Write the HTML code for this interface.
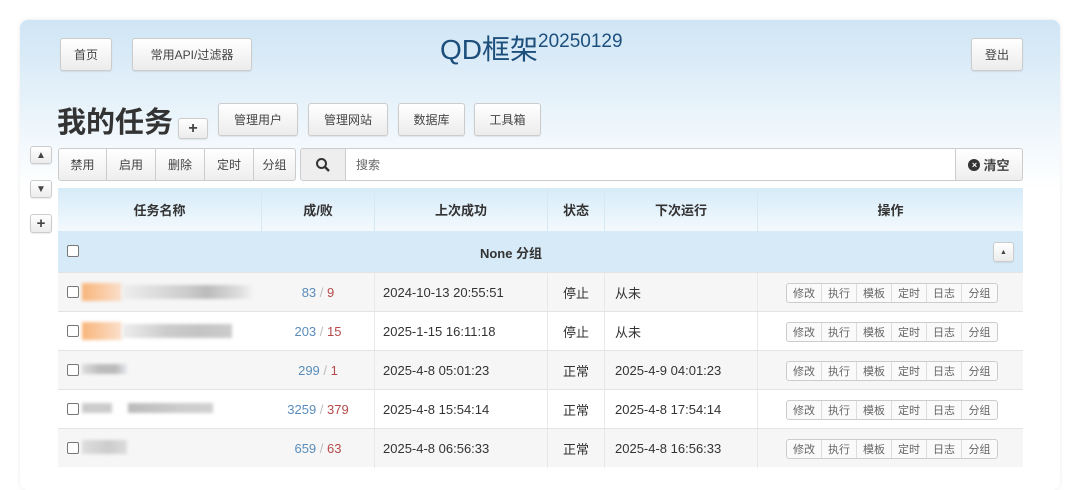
<!DOCTYPE html>
<html><head><meta charset="utf-8"><style>
*{box-sizing:border-box;margin:0;padding:0}
body{width:1080px;height:476px;background:#fff;font-family:"Liberation Sans","Noto Sans CJK SC",sans-serif;position:relative;overflow:hidden;color:#333}
.card{position:absolute;left:20px;top:20px;width:1040px;height:470px;border-radius:8px;background:linear-gradient(180deg,#cfe5f5 0px,#e3f0f9 70px,#f7fbfe 140px,#fff 170px);box-shadow:0 0 6px rgba(0,0,0,.08)}
.a{position:absolute}
.btn{position:absolute;border:1px solid #ccc;border-radius:3px;background:linear-gradient(#fff,#ececec);font-size:12px;color:#444;display:flex;align-items:center;justify-content:center;box-shadow:0 1px 1px rgba(0,0,0,.08)}
.tb{position:absolute;top:148px;height:33px;border:1px solid #ccc;background:linear-gradient(#fff,#eee);font-size:12px;display:flex;align-items:center;justify-content:center;color:#444}
.hd{position:absolute;top:188px;height:43px;font-size:13px;font-weight:bold;display:flex;align-items:center;justify-content:center;border-right:1px solid #d8e8f3}
.row{position:absolute;left:58px;width:965px;height:39px;border-top:1px solid #e4e4e4;font-size:13px}
.c{position:absolute;top:0;height:39px;display:flex;align-items:center;border-right:1px solid #e8e8e8}
.cb{position:absolute;left:9px;top:13px;width:12px;height:12px;border:1px solid #777;border-radius:2px;background:#fff}
.ops{position:absolute;left:728px;top:10px;height:20px;display:flex;border:1px solid #ccc;border-radius:3px;background:#fafafa}
.ops span{width:35px;font-size:11px;color:#666;display:flex;align-items:center;justify-content:center;border-right:1px solid #ddd}
.ops span:last-child{border-right:none}
.s{color:#5a8dbb}.f{color:#b54a4a}.sl{color:#bbb}
.blur{position:absolute;height:10px;filter:blur(1.5px)}
</style></head><body>
<div class="card"></div>
<div class="btn" style="left:60px;top:38px;width:52px;height:33px">首页</div>
<div class="btn" style="left:132px;top:38px;width:120px;height:33px">常用API/过滤器</div>
<div class="a" style="left:440px;top:28px;font-size:28px;color:#1d4f7c">QD框架<sup style="font-size:19px;position:relative;top:-2px">20250129</sup></div>
<div class="btn" style="left:971px;top:38px;width:52px;height:33px">登出</div>
<div class="a" style="left:57px;top:99px;font-size:29px;font-weight:bold;color:#333">我的任务</div>
<div class="btn" style="left:178px;top:118px;width:30px;height:21px;font-weight:bold;font-size:16px">+</div>
<div class="btn" style="left:218px;top:103px;width:80px;height:33px">管理用户</div>
<div class="btn" style="left:308px;top:103px;width:80px;height:33px">管理网站</div>
<div class="btn" style="left:398px;top:103px;width:67px;height:33px">数据库</div>
<div class="btn" style="left:474px;top:103px;width:67px;height:33px">工具箱</div>
<div class="btn" style="left:30px;top:146px;width:22px;height:18px;font-size:10px">&#9650;</div>
<div class="btn" style="left:30px;top:180px;width:22px;height:18px;font-size:10px">&#9660;</div>
<div class="btn" style="left:30px;top:214px;width:22px;height:19px;font-size:15px;font-weight:bold">+</div>
<div class="tb" style="left:58px;width:49px;border-radius:3px 0 0 3px">禁用</div>
<div class="tb" style="left:106px;width:50px">启用</div>
<div class="tb" style="left:155px;width:50px">删除</div>
<div class="tb" style="left:204px;width:50px">定时</div>
<div class="tb" style="left:253px;width:43px;border-radius:0 3px 3px 0">分组</div>
<div class="tb" style="left:300px;width:46px;background:#eee;border-radius:3px 0 0 3px"><svg width="16" height="16" viewBox="0 0 16 16"><circle cx="6.5" cy="6.5" r="4.5" fill="none" stroke="#333" stroke-width="2"/><path d="M10 10l4 4" stroke="#333" stroke-width="2.4"/></svg></div>
<div class="tb" style="left:345px;width:611px;background:#fff;justify-content:flex-start;padding-left:10px;color:#666">搜索</div>
<div class="tb" style="left:955px;width:68px;border-radius:0 3px 3px 0;font-weight:bold;font-size:13px"><span style="display:inline-block;width:12px;height:12px;border-radius:50%;background:#333;color:#fff;font-size:9px;line-height:12px;text-align:center;margin-right:3px">×</span>清空</div>
<div class="a" style="left:58px;top:188px;width:965px;height:43px;background:linear-gradient(#d6ebf8,#f3f9fd)"></div>
<div class="hd" style="left:58px;width:204px">任务名称</div>
<div class="hd" style="left:262px;width:113px">成/败</div>
<div class="hd" style="left:375px;width:173px">上次成功</div>
<div class="hd" style="left:548px;width:57px">状态</div>
<div class="hd" style="left:605px;width:153px">下次运行</div>
<div class="hd" style="left:758px;width:265px;border-right:none">操作</div>
<div class="a" style="left:58px;top:231px;width:965px;height:41px;background:#d7eaf7;font-size:13px;font-weight:bold">
<div class="cb" style="top:14px"></div>
<div class="a" style="top:12px;text-align:center;left:0;width:1022px;margin-left:-58px">None 分组</div>
<div class="btn" style="left:935px;top:11px;width:21px;height:20px;font-size:7px">&#9650;</div>
</div>

<div class="row" style="top:272px;background:#f6f6f6"><div class="cb"></div>
<div class="blur" style="left:24px;top:10px;width:40px;height:18px;background:linear-gradient(90deg,#f8b57a,#fbe0cc)"></div><div class="blur" style="left:64px;top:12px;width:130px;height:14px;background:linear-gradient(90deg,#eee,#ccc 50%,#bbb 65%,#ddd 90%,#f2f2f2)"></div>
<div class="c" style="left:204px;width:113px;justify-content:center"><span class="s">83</span>&nbsp;<span class="sl">/</span>&nbsp;<span class="f">9</span></div>
<div class="c" style="left:317px;width:173px;padding-left:8px">2024-10-13 20:55:51</div>
<div class="c" style="left:490px;width:57px;justify-content:center">停止</div>
<div class="c" style="left:547px;width:153px;padding-left:10px">从未</div>
<div class="ops"><span>修改</span><span>执行</span><span>模板</span><span>定时</span><span>日志</span><span>分组</span></div></div>

<div class="row" style="top:311px;background:#fff"><div class="cb"></div>
<div class="blur" style="left:24px;top:10px;width:40px;height:18px;background:linear-gradient(90deg,#f8b57a,#fbe0cc)"></div><div class="blur" style="left:64px;top:12px;width:110px;height:14px;background:linear-gradient(90deg,#eee,#ccc 40%,#c4c4c4 70%,#ccc)"></div>
<div class="c" style="left:204px;width:113px;justify-content:center"><span class="s">203</span>&nbsp;<span class="sl">/</span>&nbsp;<span class="f">15</span></div>
<div class="c" style="left:317px;width:173px;padding-left:8px">2025-1-15 16:11:18</div>
<div class="c" style="left:490px;width:57px;justify-content:center">停止</div>
<div class="c" style="left:547px;width:153px;padding-left:10px">从未</div>
<div class="ops"><span>修改</span><span>执行</span><span>模板</span><span>定时</span><span>日志</span><span>分组</span></div></div>

<div class="row" style="top:350px;background:#f6f6f6"><div class="cb"></div>
<div class="blur" style="left:24px;top:13px;width:45px;height:10px;background:linear-gradient(90deg,#ddd,#bbb 40%,#bbb 75%,#e4e8ef)"></div>
<div class="c" style="left:204px;width:113px;justify-content:center"><span class="s">299</span>&nbsp;<span class="sl">/</span>&nbsp;<span class="f">1</span></div>
<div class="c" style="left:317px;width:173px;padding-left:8px">2025-4-8 05:01:23</div>
<div class="c" style="left:490px;width:57px;justify-content:center">正常</div>
<div class="c" style="left:547px;width:153px;padding-left:10px">2025-4-9 04:01:23</div>
<div class="ops"><span>修改</span><span>执行</span><span>模板</span><span>定时</span><span>日志</span><span>分组</span></div></div>

<div class="row" style="top:389px;background:#fff"><div class="cb"></div>
<div class="blur" style="left:24px;top:13px;width:30px;height:10px;background:#ccc"></div><div class="blur" style="left:70px;top:13px;width:85px;height:10px;background:linear-gradient(90deg,#bbb,#ccc 60%,#d0d0d0)"></div>
<div class="c" style="left:204px;width:113px;justify-content:center"><span class="s">3259</span>&nbsp;<span class="sl">/</span>&nbsp;<span class="f">379</span></div>
<div class="c" style="left:317px;width:173px;padding-left:8px">2025-4-8 15:54:14</div>
<div class="c" style="left:490px;width:57px;justify-content:center">正常</div>
<div class="c" style="left:547px;width:153px;padding-left:10px">2025-4-8 17:54:14</div>
<div class="ops"><span>修改</span><span>执行</span><span>模板</span><span>定时</span><span>日志</span><span>分组</span></div></div>

<div class="row" style="top:428px;background:#f6f6f6"><div class="cb"></div>
<div class="blur" style="left:24px;top:11px;width:45px;height:14px;background:linear-gradient(90deg,#ddd,#ccc 60%,#ddd)"></div>
<div class="c" style="left:204px;width:113px;justify-content:center"><span class="s">659</span>&nbsp;<span class="sl">/</span>&nbsp;<span class="f">63</span></div>
<div class="c" style="left:317px;width:173px;padding-left:8px">2025-4-8 06:56:33</div>
<div class="c" style="left:490px;width:57px;justify-content:center">正常</div>
<div class="c" style="left:547px;width:153px;padding-left:10px">2025-4-8 16:56:33</div>
<div class="ops"><span>修改</span><span>执行</span><span>模板</span><span>定时</span><span>日志</span><span>分组</span></div></div>
</body></html>
